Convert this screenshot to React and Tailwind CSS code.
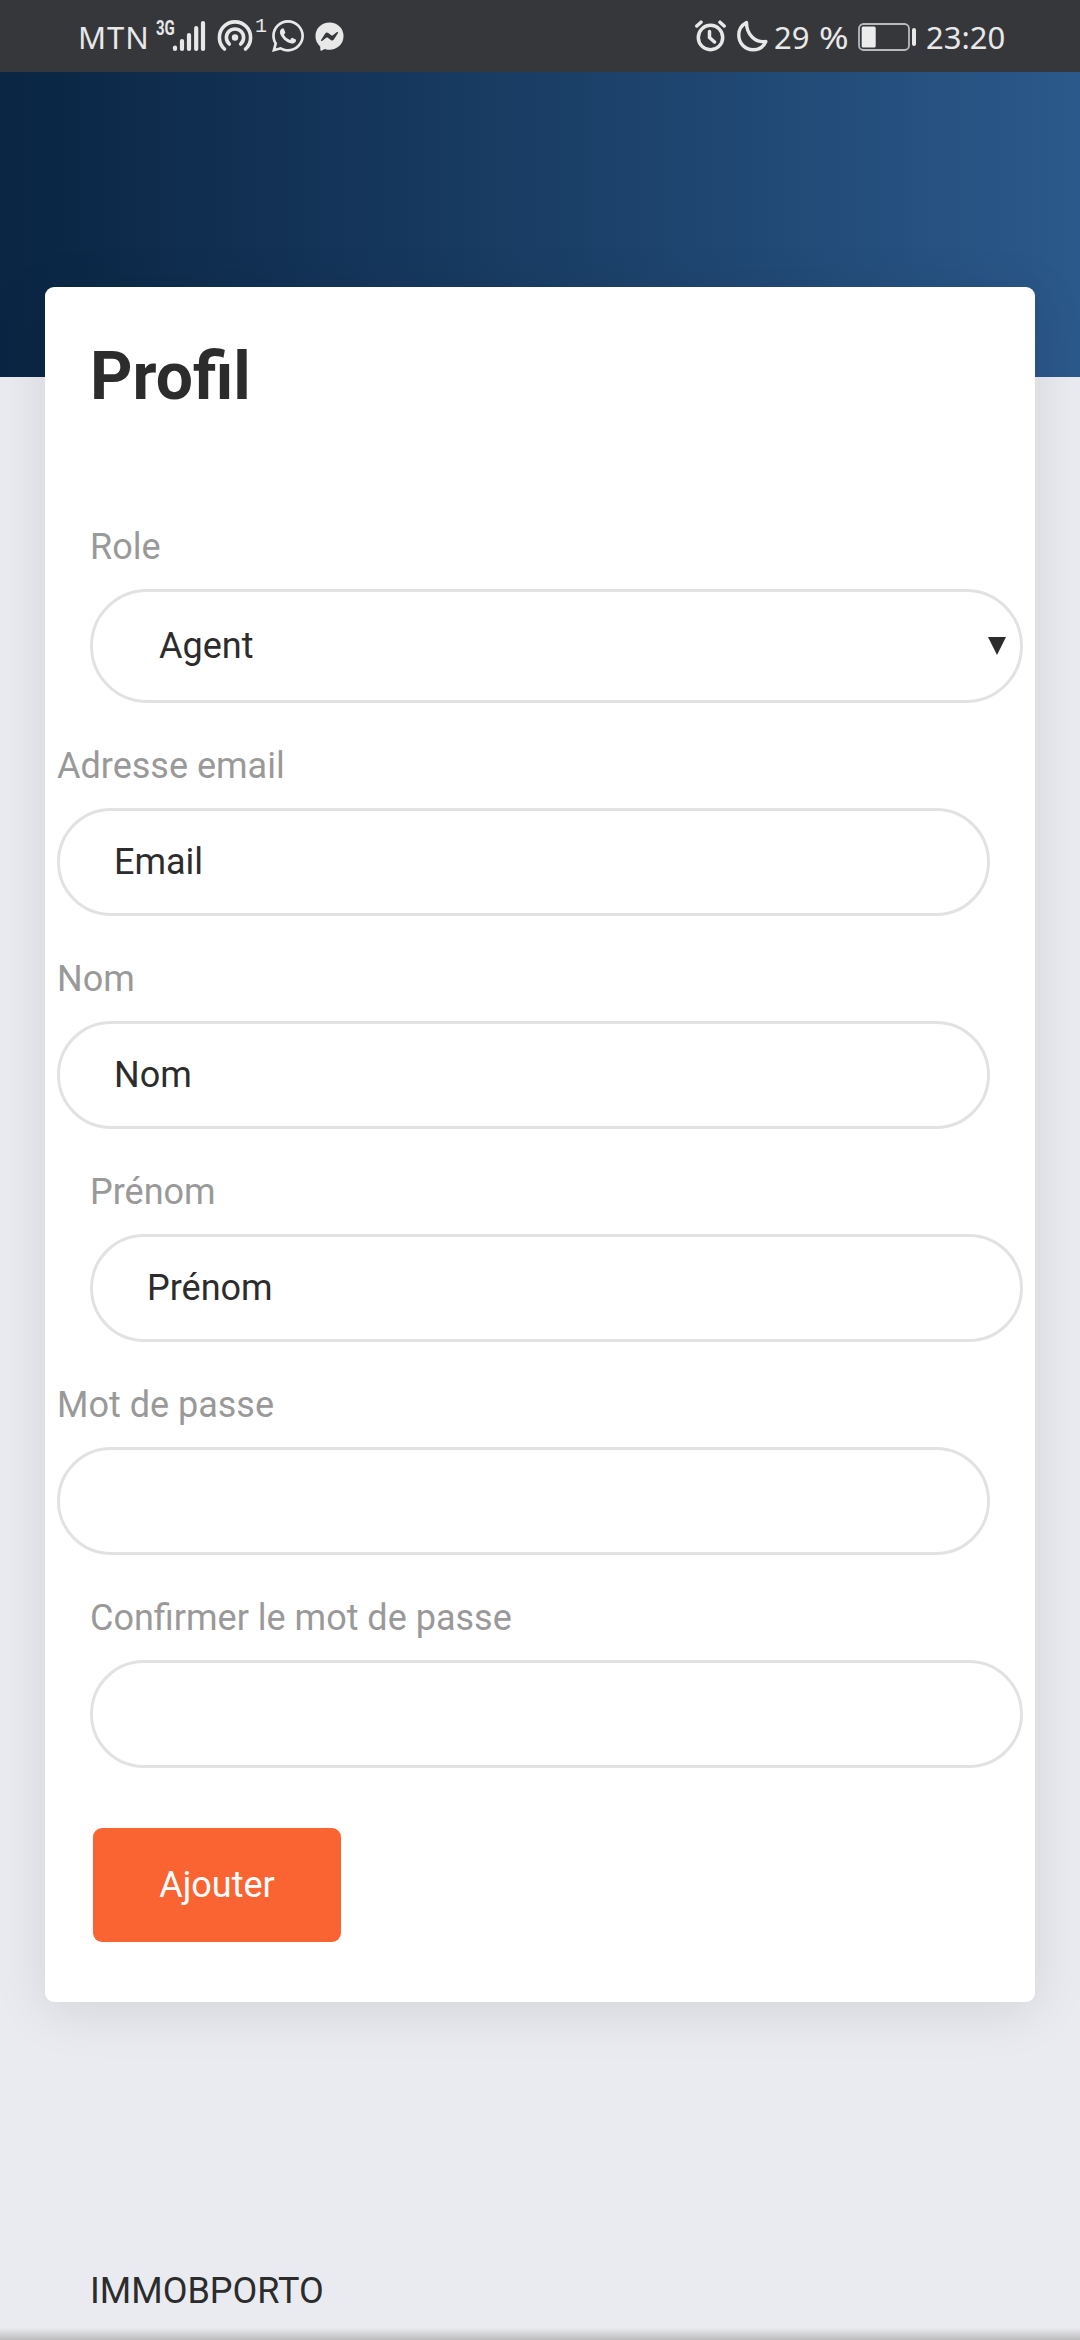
import React from "react";
import { FaWhatsapp, FaFacebookMessenger } from "react-icons/fa6";

function SignalIcon() {
  return (
    <svg width="34" height="32" viewBox="0 0 34 32" stroke="#e8e8e8" strokeWidth="4.2" strokeLinecap="round">
      <path d="M3 27.5V29M10 21V29M17 15V29M24.2 8V29M31 3V29" />
    </svg>
  );
}

function HotspotIcon() {
  return (
    <svg width="36" height="32" viewBox="0 0 36 32" fill="none" stroke="#e8e8e8" strokeWidth="3.6" strokeLinecap="round">
      <path d="M7.5 29A15.6 15.6 0 1 1 28.5 29" />
      <path d="M12.3 24A8.6 8.6 0 1 1 23.7 24" />
      <circle cx="18" cy="17.5" r="3.2" fill="#e8e8e8" stroke="none" />
    </svg>
  );
}

function AlarmIcon() {
  return (
    <svg width="32" height="32" viewBox="0 0 32 32" fill="none" stroke="#e8e8e8" strokeWidth="3.5" strokeLinecap="round">
      <circle cx="15.500" cy="17.500" r="12.200" />
      <path d="M14.500 11.500V17.500L19.500 22M1.800 6L6 2.200M29.200 6L25 2.200" />
    </svg>
  );
}

function MoonIcon() {
  return (
    <svg width="32" height="32" viewBox="0 0 32 32" fill="none" stroke="#e8e8e8" strokeWidth="3.400" strokeLinejoin="round">
      <path d="M9.500 2.500C4 5.500 1.800 10 1.800 15C1.800 23.500 8 29.700 16 29.700C22 29.700 26.800 26.500 28.800 21.500C18.500 23 9.500 15 9.500 2.500Z" />
    </svg>
  );
}

function BatteryIcon() {
  return (
    <svg width="60" height="28" viewBox="0 0 60 28">
      <rect x="1" y="1" width="50" height="26" rx="4.500" fill="none" stroke="#b9babb" strokeWidth="1.800" />
      <rect x="3.700" y="3.500" width="14" height="21" rx="1.500" fill="#ececec" />
      <rect x="54" y="5" width="4" height="18" rx="2" fill="#e8e8e8" />
    </svg>
  );
}

function StatusBar() {
  return (
    <header className="flex h-[72px] items-start justify-between bg-[#36373b] pr-[83px] pl-[78px] pt-5 font-['Noto_Sans',sans-serif] text-[31px] leading-[34px] text-[#e8e8e8]">
      <div className="flex items-start">
        <span className="w-[78px] tracking-[1px]">MTN</span>
        <span className="w-4 origin-left scale-x-75 font-['Roboto',sans-serif] text-[20px] leading-4 font-bold">3G</span>
        <SignalIcon />
        <span className="w-[11px]" />
        <HotspotIcon />
        <span className="w-[19px] pl-[2px] font-['Liberation_Mono',monospace] text-[20px] leading-[14px]">1</span>
        <FaWhatsapp className="h-8 w-[32px]" viewBox="0 32 448 448" />
        <FaFacebookMessenger className="mt-0.5 ml-[11px] h-[29px] w-[29px]" />
      </div>
      <div className="flex items-start">
        <AlarmIcon />
        <span className="w-[10px]" />
        <MoonIcon />
        <span className="flex w-[89px] gap-[10px] pl-[5px]">
          <span>29</span>
          <span className="origin-left scale-x-115">%</span>
        </span>
        <span className="mt-[3px]"><BatteryIcon /></span>
        <span className="w-[79px] pl-2">23:20</span>
      </div>
    </header>
  );
}

function Field({ label, shifted, children }) {
  return (
    <div className={shifted ? "mb-9 ml-3 w-[933px]" : "mb-9 ml-[45px] w-[933px]"}>
      <label className="mb-[15px] block leading-[54px] text-[#999999]">{label}</label>
      {children}
    </div>
  );
}

function TextInput({ value }) {
  return (
    <div className="flex h-[108px] items-center rounded-full border-[3px] border-[#e2e2e2] px-[54px] text-[#2c2c2c]">
      {value}
    </div>
  );
}

export default function App() {
  return (
    <div className="flex h-[2340px] w-[1080px] flex-col overflow-hidden bg-[#eaebf0] font-['Roboto',sans-serif] text-[36px]">
      <StatusBar />
      <div className="h-[305px] shrink-0 bg-linear-to-r from-[#0a2543] to-[#2b598b]" />
      <main className="relative -mt-[90px] ml-[45px] h-[1715px] w-[990px] shrink-0 rounded-[9px] bg-white shadow-[0_9px_54px_rgba(0,0,0,0.10)]">
        <h1 className="ml-[45px] pt-[45px] text-[66px] leading-[90px] font-bold text-[#2c2c2c]">Profil</h1>
        <form className="mt-[98px]">
          <Field label="Role">
            <div className="flex h-[114px] items-center justify-between rounded-full border-[3px] border-[#e2e2e2] pr-[14px] pl-[66px] text-[#2c2c2c]">
              <span>Agent</span>
              <svg width="18" height="18" viewBox="0 0 18 18" fill="#2c2c2c">
                <path d="M0 0H18L9 18Z" />
              </svg>
            </div>
          </Field>
          <Field label="Adresse email" shifted><TextInput value="Email" /></Field>
          <Field label="Nom" shifted><TextInput value="Nom" /></Field>
          <Field label="Prénom"><TextInput value="Prénom" /></Field>
          <Field label="Mot de passe" shifted><TextInput value="" /></Field>
          <Field label="Confirmer le mot de passe"><TextInput value="" /></Field>
          <button type="button" className="mt-[60px] ml-12 block h-[114px] w-[248px] rounded-[9px] bg-[#fa6433] text-white">
            Ajouter
          </button>
        </form>
      </main>
      <footer className="flex flex-1 flex-col justify-between">
        <p className="mt-[262px] ml-[90px] leading-[54px] text-[#2c2c2c]">IMMOBPORTO</p>
        <div className="h-3 bg-linear-to-b from-[#eaebf0] to-[#bcbcbe]" />
      </footer>
    </div>
  );
}
